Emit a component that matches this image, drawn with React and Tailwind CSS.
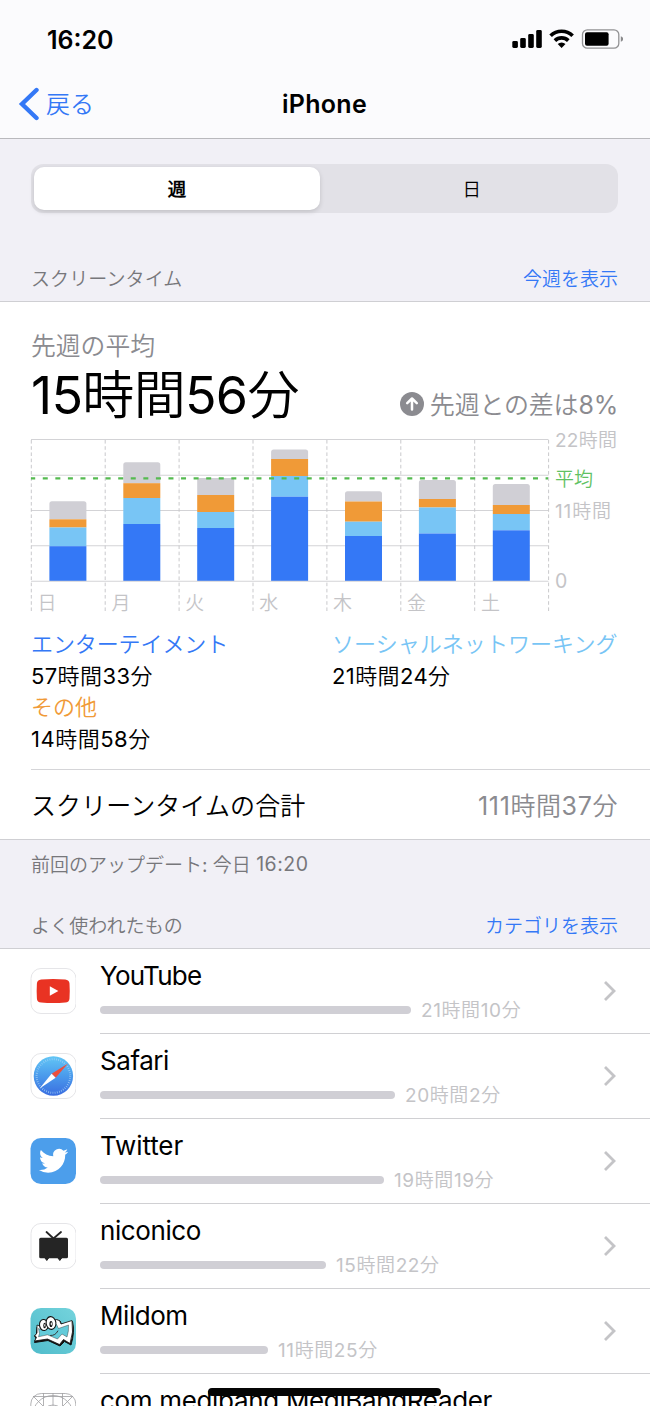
import React from "react";

const DAYS = [
  { label: "日", tops: [501.3, 519.3, 527.5, 546.2] },
  { label: "月", tops: [462.2, 483.2, 498, 524] },
  { label: "火", tops: [478, 495, 512, 528] },
  { label: "水", tops: [449.5, 459, 476, 496.7] },
  { label: "木", tops: [491.2, 501.5, 521.7, 536] },
  { label: "金", tops: [480, 499, 507.5, 533.5] },
  { label: "土", tops: [484, 505, 514, 530.3] },
];
const FILLS = ["#d0cfd5", "#f09a37", "#78c5f5", "#3478f6"];
const LEFT = 31;
const COL = 73.9;
const BASE = 581;

function Chart() {
  return (
    <svg className="block overflow-visible" width="650" height="180" viewBox="0 435 650 180">
      {[439.5, 475.2, 510.5, 545.7].map((y) => (
        <line key={y} x1="31" x2="548.5" y1={y} y2={y} stroke="#d3d3d6" strokeWidth="1.1" />
      ))}
      {[0, 1, 2, 3, 4, 5, 6, 7].map((i) => (
        <line key={i} x1={31.3 + i * COL} x2={31.3 + i * COL} y1="440" y2="613" stroke="#c9c9cc" strokeWidth="1" strokeDasharray="3.6 2.6" />
      ))}
      {DAYS.map((d, i) => {
        const x = LEFT + 18.4 + i * COL;
        const t = d.tops;
        return (
          <g key={d.label}>
            <path d={`M${x} ${t[1]}V${t[0] + 2.5}q0-2.5 2.5-2.5h32q2.5 0 2.5 2.5V${t[1]}z`} fill={FILLS[0]} />
            <rect x={x} y={t[1]} width="37" height={t[2] - t[1]} fill={FILLS[1]} />
            <rect x={x} y={t[2]} width="37" height={t[3] - t[2]} fill={FILLS[2]} />
            <rect x={x} y={t[3]} width="37" height={BASE - t[3]} fill={FILLS[3]} />
            <text x={LEFT + 6.5 + i * COL} y="610" fontSize="19" fill="#c4c4c7">{d.label}</text>
          </g>
        );
      })}
      <line x1="31" x2="548.5" y1="581.3" y2="581.3" stroke="#d3d3d6" strokeWidth="1.1" />
      <line x1="31" x2="548" y1="478.3" y2="478.3" stroke="#55bb50" strokeWidth="2.2" strokeDasharray="5 7.57" strokeDashoffset="0.8" />
      <text x="555" y="446.5" fontSize="19" fill="#c4c4c7" textLength="62">22時間</text>
      <text x="555" y="485.5" fontSize="19" fill="#5fc263" textLength="38">平均</text>
      <text x="555" y="517.5" fontSize="19" fill="#c4c4c7" textLength="56">11時間</text>
      <text x="555" y="588" fontSize="19.5" fill="#c4c4c7">0</text>
    </svg>
  );
}

function StatusIcons() {
  return (
    <svg width="112" height="22" viewBox="511 28 112 22">
      <rect x="512.3" y="41" width="5.6" height="7" rx="1.4" />
      <rect x="520.2" y="38" width="5.6" height="10" rx="1.4" />
      <rect x="528.2" y="34" width="5.6" height="14" rx="1.4" />
      <rect x="536.2" y="30" width="5.6" height="18" rx="1.4" />
      <g fill="none" stroke="#000" strokeWidth="3.7">
        <path d="M550.6 35.8a15.6 15.6 0 0 1 22 0" />
        <path d="M554.9 40.6a9.6 9.6 0 0 1 13.4 0" />
      </g>
      <path d="M557.7 44.1a5.6 5.6 0 0 1 7.8 0L561.6 48z" />
      <rect x="582.5" y="29.8" width="36.3" height="18.4" rx="4.8" fill="none" stroke="#929294" strokeWidth="1.3" />
      <rect x="585" y="32.2" width="23.6" height="13.6" rx="2" />
      <path d="M620.8 36.2q2.4.9 2.4 2.8t-2.4 2.8z" fill="#8a8a8c" />
    </svg>
  );
}

const frame = <rect x="1" y=".5" width="45" height="45" rx="10" fill="#fff" stroke="#e5e5e8" />;

function YouTubeIcon() {
  return (
    <svg width="46" height="46" viewBox="0 0 46 46">
      {frame}
      <path d="M11.200 11.400Q23.200 10.400 35.200 11.400q4.100.300 4.300 4.200.500 7.400 0 14.800-.200 3.900-4.300 4.200-12 1-24 0-4.100-.300-4.300-4.200-.500-7.400 0-14.800.200-3.900 4.300-4.200z" fill="#e93323" />
      <path d="M19.800 18.200v9.600l8.600-4.800z" fill="#fff" />
    </svg>
  );
}

function SafariIcon() {
  return (
    <svg width="46" height="46" viewBox="0 0 46 46">
      <defs>
        <linearGradient id="safari" x1="0" y1="0" x2="0" y2="1">
          <stop offset="0" stopColor="#62c6f5" />
          <stop offset=".5" stopColor="#4a9aec" />
          <stop offset="1" stopColor="#3a6de0" />
        </linearGradient>
      </defs>
      {frame}
      <g transform="translate(.4 0)">
        <circle cx="23" cy="23" r="19.700" fill="url(#safari)" />
        <circle cx="23" cy="23" r="16.800" fill="none" stroke="#a8d3f7" strokeWidth="2" strokeDasharray=".6 1.600" />
        <path d="M37.600 10.600 21.200 20.800l4 4z" fill="#eb4e3d" />
        <path d="M9.200 35.400 21.200 20.800l4 4z" fill="#fff" />
      </g>
    </svg>
  );
}

function TwitterIcon() {
  return (
    <svg width="46" height="46" viewBox="0 0 46 46">
      <rect x=".5" width="45.500" height="46" rx="10.500" fill="#4c9eeb" />
      <g transform="translate(8.900 8.100) scale(1.220)">
        <path fill="#fff" d="M23.953 4.570a10 10 0 01-2.825.775 4.958 4.958 0 002.163-2.723c-.951.555-2.005.959-3.127 1.184a4.920 4.920 0 00-8.384 4.482C7.690 8.095 4.067 6.130 1.640 3.162a4.822 4.822 0 00-.666 2.475c0 1.710.870 3.213 2.188 4.096a4.904 4.904 0 01-2.228-.616v.060a4.923 4.923 0 003.946 4.827 4.996 4.996 0 01-2.212.085 4.936 4.936 0 004.604 3.417 9.867 9.867 0 01-6.102 2.105c-.390 0-.779-.023-1.170-.067a13.995 13.995 0 007.557 2.209c9.053 0 13.998-7.496 13.998-13.985 0-.210 0-.420-.015-.630A9.935 9.935 0 0024 4.590z" />
      </g>
    </svg>
  );
}

function NiconicoIcon() {
  return (
    <svg width="46" height="46" viewBox="0 0 46 46">
      {frame}
      <path d="M16.500 9l7 6.500L31 9" fill="none" stroke="#252525" strokeWidth="1.800" strokeLinecap="round" />
      <rect x="9.200" y="14.800" width="28.800" height="20.400" rx="1.500" fill="#252525" />
      <path d="M15 35h3.600l-1.800 2.500zM28 35h3.600l-1.800 2.500z" fill="#252525" stroke="#252525" strokeLinejoin="round" />
    </svg>
  );
}

function MildomIcon() {
  return (
    <svg width="46" height="46" viewBox="0 0 46 46">
      <defs>
        <linearGradient id="mildom" x1="1" y1="0" x2="0" y2="1">
          <stop offset="0" stopColor="#74d3dc" />
          <stop offset="1" stopColor="#50bccb" />
        </linearGradient>
      </defs>
      <rect x=".5" width="45.500" height="46" rx="10.500" fill="url(#mildom)" />
      <path d="M7 19L11 19.500 27 12 30 13 31.500 16 42.500 13.500Q45 24 41 37L34.500 33.500 30 38 18 32.500 4.500 34.500 6 30 4.500 28 6.500 26z" fill="#111" stroke="#111" strokeWidth="1" strokeLinejoin="round" />
      <path d="M7 17L11 18.500 26 11.500 29.500 12.500 31 16 42 12.500Q44 24 40 35.500L33.500 31.500 29.500 36.500 17.500 31 4.500 33 6.500 29.500 5 27.500 7 25z" fill="#fff" stroke="#111" strokeWidth=".8" strokeLinejoin="round" />
      <path d="M8.500 20.500L12 22 26.500 16.500 28.500 20.500 38.500 17Q39 23 37 29L32 26 27.500 31 17.500 26.800 8.500 28.800 9.500 25.500z" fill="#63cbd9" stroke="#222" strokeWidth=".4" strokeLinejoin="round" />
      <path d="M20.500 27.500q5 .300 7.300-4.500" fill="none" stroke="#333" strokeWidth="1" strokeLinecap="round" />
      <ellipse cx="13.800" cy="17" rx="4.300" ry="5.500" fill="#fff" stroke="#111" strokeWidth="1.100" transform="rotate(-8 13.800 17)" />
      <ellipse cx="21" cy="15" rx="4.900" ry="6.400" fill="#fff" stroke="#111" strokeWidth="1.100" transform="rotate(-8 21 15)" />
      <ellipse cx="14.600" cy="17.500" rx="1.300" ry="2.700" fill="#111" />
      <ellipse cx="14.800" cy="17.300" rx=".5" ry="1.400" fill="#fff" />
      <ellipse cx="21" cy="16" rx="1.600" ry="3.100" fill="#111" />
      <ellipse cx="21.300" cy="15.800" rx=".6" ry="1.600" fill="#fff" />
    </svg>
  );
}

function PlaceholderIcon() {
  return (
    <svg width="46" height="46" viewBox="0 0 46 46" fill="none" stroke="#a0a0a2" strokeWidth=".8">
      <rect x=".8" y=".5" width="45" height="45" rx="10.500" fill="#fff" />
      <path d="M3 3l40 40M43 3L3 43M13.500 0v46M23 0v46M32.500 0v46M0 13.500h46M0 23h46M0 32.500h46M3 3.500h40" />
      <circle cx="23" cy="23" r="20.500" />
      <circle cx="23" cy="23" r="11" />
      <circle cx="23" cy="23" r="6" />
    </svg>
  );
}

const APPS = [
  { name: "YouTube", time: "21時間10分", bar: "w-[311px]", Icon: YouTubeIcon, track: "tracking-[-0.75px]" },
  { name: "Safari", time: "20時間2分", bar: "w-[295px]", Icon: SafariIcon, track: "tracking-[-0.45px]" },
  { name: "Twitter", time: "19時間19分", bar: "w-[284px]", Icon: TwitterIcon, track: "tracking-[-0.1px]" },
  { name: "niconico", time: "15時間22分", bar: "w-[226px]", Icon: NiconicoIcon, track: "tracking-[-0.4px]" },
  { name: "Mildom", time: "11時間25分", bar: "w-[168px]", Icon: MildomIcon, track: "tracking-[-0.45px]" },
];

function AppRow({ name, time, bar, Icon, track }) {
  return (
    <div className="flex h-[85px] pl-[30px]">
      <div className="w-[70px] shrink-0 pt-[19px]"><Icon /></div>
      <div className="flex flex-1 border-b border-[#d0d0d3]">
        <div className="flex-1">
          <div className={`flex h-[54px] items-center text-[26px] text-black ${track}`}>{name}</div>
          <div className="flex h-[15px] items-start">
            <div className={`mt-[3px] h-[8px] rounded-full bg-[#d0cfd5] ${bar}`} />
            <div className="ml-[10px] flex h-[15px] items-center text-[19px] tracking-[0.6px] text-[#c4c4c7]">{time}</div>
          </div>
        </div>
        <svg className="mt-[31px] mr-[33px]" width="14" height="22" viewBox="0 0 14 22" fill="none" stroke="#c4c4c7" strokeWidth="2.800">
          <path d="M2 2l9 9-9 9" />
        </svg>
      </div>
    </div>
  );
}

export default function App() {
  return (
    <div className="relative h-[1406px] w-[650px] overflow-hidden bg-white font-['Inter','Noto_Sans_CJK_JP_DemiLight','Noto_Sans_CJK_JP_Light','Noto_Sans_CJK_JP',sans-serif] font-normal leading-none whitespace-nowrap text-black">
      <header className="h-[139px] border-b border-[#b9b9bd] bg-[#fbfbfd]">
        <div className="flex h-[78px] items-center justify-between pr-[27px] pl-[47px]">
          <div className="pt-[2px] text-[25px] font-semibold">16:20</div>
          <StatusIcons />
        </div>
        <div className="grid h-[52px] grid-cols-3 items-center pl-[18px] pr-[19px]">
          <div className="flex items-center text-[24px] text-[#3478f6]">
            <svg width="22" height="34" viewBox="0 0 22 34" fill="none" stroke="#3478f6" strokeWidth="4.400" strokeLinecap="round" strokeLinejoin="miter">
              <path d="M18.500 3L4 17l14.500 14" />
            </svg>
            <span className="ml-[6px] pt-[2px]">戻る</span>
          </div>
          <div className="text-center text-[25px] font-semibold tracking-[0.3px]">iPhone</div>
        </div>
      </header>

      <section className="h-[163px] border-b border-[#cfcfd3] bg-[#f1f0f6] pt-[25px]">
        <div className="ml-[31px] grid h-[49px] w-[587px] grid-cols-2 items-center rounded-[12px] bg-[#e2e1e7] p-[3px] text-center text-[18.500px]">
          <div className="flex h-[43px] w-[286px] items-center justify-center rounded-[10px] bg-white pt-[1px] font-bold shadow-[0_2px_5px_rgba(0,0,0,0.14)]">週</div>
          <div className="pt-[1px] pl-[4px] font-medium">日</div>
        </div>
        <div className="mt-[42px] flex h-[48px] items-center justify-between pr-[32px] pl-[31px] text-[19px]">
          <span className="tracking-[0.1px] text-[#77777b]">スクリーンタイム</span>
          <span className="text-[#3478f6]">今週を表示</span>
        </div>
      </section>

      <section>
        <div className="flex h-[133px] justify-between pr-[32px] pl-[31px]">
          <div className="pt-[32px]">
            <div className="flex h-[25px] items-center text-[24.800px] text-[#8b8b90]">先週の平均</div>
            <div className="mt-[9px] flex h-[56px] items-center text-[52px] tracking-[-0.7px]">15時間56分</div>
          </div>
          <div className="mb-[18px] flex h-[26px] items-center self-end text-[25px] tracking-[-0.2px] text-[#8b8b90]">
            <svg className="mr-[6px]" width="24" height="24" viewBox="0 0 24 24">
              <circle cx="12" cy="12" r="12" fill="#8b8b90" />
              <path d="M12 17.500V7M7.200 11.200L12 6.500l4.800 4.700" fill="none" stroke="#fff" strokeWidth="2.500" strokeLinecap="round" strokeLinejoin="round" />
            </svg>
            <span className="pt-[2px]">先週との差は8%</span>
          </div>
        </div>
        <Chart />
        <div className="grid h-[154px] grid-cols-[301px_1fr] content-start pt-[14px] pl-[31px] text-[22px] leading-[31.500px]">
          <div className="tracking-[-0.1px] text-[#3478f6]">エンターテイメント</div>
          <div className="tracking-[0.050px] text-[#78c5f5]">ソーシャルネットワーキング</div>
          <div className="tracking-[0.4px]">57時間33分</div>
          <div className="tracking-[0.4px]">21時間24分</div>
          <div className="text-[#f09a37]">その他</div>
          <div />
          <div className="tracking-[0.5px]">14時間58分</div>
        </div>
        <div className="ml-[31px] flex h-[70px] items-center justify-between border-t border-[#d5d5d8] pt-[4px] pr-[32px] text-[25px]">
          <span className="tracking-[0.1px]">スクリーンタイムの合計</span>
          <span className="tracking-[0.6px] text-[#8b8b90]">111時間37分</span>
        </div>
      </section>

      <section className="h-[110px] border-y border-[#cfcfd3] bg-[#f1f0f6] pr-[32px] pl-[31px] text-[19px] text-[#77777b]">
        <div className="flex h-[50px] items-center whitespace-pre"><span>前回のアップデート: 今日 </span><span className="text-[19.500px] tracking-[0.5px]">16:20</span></div>
        <div className="mt-[12px] flex h-[48px] items-center justify-between">
          <span className="tracking-[0.1px]">よく使われたもの</span>
          <span className="text-[#3478f6]">カテゴリを表示</span>
        </div>
      </section>

      <section>
        {APPS.map((app) => <AppRow key={app.name} {...app} />)}
        <div className="flex pl-[30px]">
          <div className="w-[70px] shrink-0 pt-[19px]"><PlaceholderIcon /></div>
          <div className="flex h-[54px] items-center text-[26px] tracking-[-0.350px]">com.medibang.MediBangReader</div>
        </div>
      </section>
      <div className="absolute top-[1388px] left-[208px] h-[8px] w-[233px] rounded-full bg-[#050505]" />
    </div>
  );
}
